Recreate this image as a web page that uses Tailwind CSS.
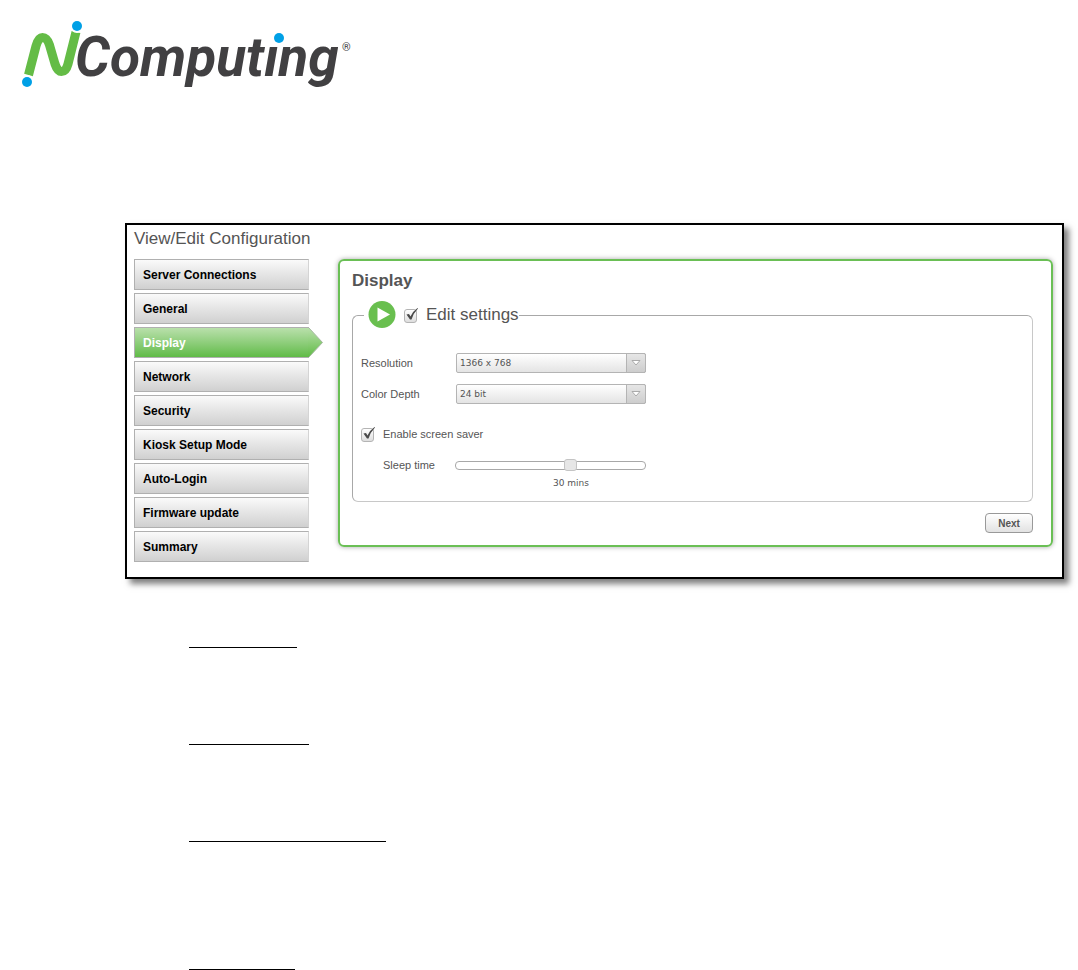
<!DOCTYPE html>
<html lang="en">
  <head>
    <meta charset="UTF-8" />
    <meta name="viewport" content="width=device-width, initial-scale=1.0" />
    <title>NComputing - View/Edit Configuration</title>
    <script src="https://cdn.jsdelivr.net/npm/@tailwindcss/browser@4"></script>
  </head>
  <body class="bg-white font-['Liberation_Sans',Arial,sans-serif] text-[#555]">
    <header class="px-5 pt-5">
      <svg class="block" width="336" height="72" viewBox="20 20 336 72" role="img" aria-label="NComputing">
        <path
          d="M28.500 75 L36 46 Q38.500 37.500 42.500 37.500 Q47 37.500 49.500 45 L55 64 Q57.500 71.500 61.500 71.500 Q66 71.500 68 64 L76 32"
          fill="none"
          stroke="#64bc46"
          stroke-width="9"
        />
        <circle cx="27" cy="82" r="7" fill="#fff" />
        <circle cx="27" cy="82" r="5" fill="#00a0e6" />
        <circle cx="77" cy="26" r="7" fill="#fff" />
        <circle cx="77" cy="26" r="5" fill="#00a0e6" />
        <text x="75" y="76" fill="#414042" font-family="Roboto, sans-serif" font-size="55" font-weight="700" font-style="italic">Computing</text>
        <circle cx="276" cy="37" r="8" fill="#fff" />
        <circle cx="279" cy="38" r="5" fill="#00a0e6" />
        <text x="342" y="51" fill="#414042" font-family="Roboto, sans-serif" font-size="11">®</text>
      </svg>
    </header>

    <main>
      <!-- Configuration window -->
      <section class="mt-[131px] mr-3.5 ml-[125px] border-2 border-black bg-white pr-[9px] pb-[15px] pl-[7px] shadow-[5px_5px_6px_rgba(0,0,0,0.5)]">
        <h1 class="h-[34px] text-[17px] leading-7">View/Edit Configuration</h1>

        <div class="flex items-start gap-[29px]">
          <nav class="flex w-[175px] shrink-0 flex-col gap-[3px] text-xs font-bold text-black">
            <a href="#" class="h-[31px] border border-[#b0b0b0] border-r-[#d4d4d4] bg-linear-to-b from-[#fafafa] to-[#d0d0d0] px-2 leading-[30px]">Server Connections</a>
            <a href="#" class="h-[31px] border border-[#b0b0b0] border-r-[#d4d4d4] bg-linear-to-b from-[#fafafa] to-[#d0d0d0] px-2 leading-[30px]">General</a>
            <a href="#" class="relative h-[31px] border border-[#b0b0b0] border-r-0 bg-linear-to-b from-[#b9e0ab] to-[#60bb46] px-2 leading-[30px] text-white">
              Display
              <svg class="absolute top-0 -right-3.5" width="15" height="29" viewBox="0 0 15 29">
                <defs>
                  <linearGradient id="arrow" x1="0" y1="0" x2="0" y2="1">
                    <stop offset="0" stop-color="#b9e0ab" />
                    <stop offset="1" stop-color="#60bb46" />
                  </linearGradient>
                </defs>
                <path d="M0 0 H1 L14.500 14.500 L1 29 H0 Z" fill="url(#arrow)" />
                <path d="M1 0 L14.500 14.500 L1 29" fill="none" stroke="#a5b8a0" />
              </svg>
            </a>
            <a href="#" class="h-[31px] border border-[#b0b0b0] border-r-[#d4d4d4] bg-linear-to-b from-[#fafafa] to-[#d0d0d0] px-2 leading-[30px]">Network</a>
            <a href="#" class="h-[31px] border border-[#b0b0b0] border-r-[#d4d4d4] bg-linear-to-b from-[#fafafa] to-[#d0d0d0] px-2 leading-[30px]">Security</a>
            <a href="#" class="h-[31px] border border-[#b0b0b0] border-r-[#d4d4d4] bg-linear-to-b from-[#fafafa] to-[#d0d0d0] px-2 leading-[30px]">Kiosk Setup Mode</a>
            <a href="#" class="h-[31px] border border-[#b0b0b0] border-r-[#d4d4d4] bg-linear-to-b from-[#fafafa] to-[#d0d0d0] px-2 leading-[30px]">Auto-Login</a>
            <a href="#" class="h-[31px] border border-[#b0b0b0] border-r-[#d4d4d4] bg-linear-to-b from-[#fafafa] to-[#d0d0d0] px-2 leading-[30px]">Firmware update</a>
            <a href="#" class="h-[31px] border border-[#b0b0b0] border-r-[#d4d4d4] bg-linear-to-b from-[#fafafa] to-[#d0d0d0] px-2 leading-[30px]">Summary</a>
          </nav>

          <form class="min-w-0 grow rounded-md border-2 border-[#6abf55] pr-[18px] pb-3 pl-3 shadow-[0_0_5px_rgba(0,0,0,0.35)]">
            <h2 class="text-[17px] leading-10 font-bold">Display</h2>

            <fieldset class="rounded-md border border-[#a8a8a8] border-r-[#c8c8c8] border-b-[#c8c8c8] pb-2.5 pl-2">
              <legend class="ml-[3px] flex h-7 items-center pl-1 text-[17px]">
                <svg width="28" height="28" viewBox="0 0 28 28" aria-hidden="true">
                  <circle cx="14" cy="13.500" r="13.500" fill="#69bf4f" />
                  <path d="M9.500 6.500 L22 13.500 L9.500 20.500 Z" fill="#fff" />
                </svg>
                <span class="relative ml-2 h-4 w-4">
                  <input type="checkbox" id="edit-settings" checked class="peer mt-0.5 block h-3.5 w-[13px] appearance-none rounded-[3px] border border-[#b4b4b4] bg-linear-to-b from-white to-[#dedede]" />
                  <svg class="pointer-events-none absolute top-0 left-0 hidden peer-checked:block" width="16" height="16" viewBox="0 0 16 16">
                    <path d="M2.500 7.500 L5 7 L6.500 9.500 Q9 4 13.500 1 L14 1.500 Q9.500 6 7.500 12.500 L6 12.500 Z" fill="#4a4a4a" />
                  </svg>
                </span>
                <label for="edit-settings" class="pl-1.5">Edit settings</label>
              </legend>

              <div class="mt-6 flex flex-col gap-[11px] text-[11px]">
                <div class="flex h-5 items-center">
                  <label for="resolution" class="w-[95px]">Resolution</label>
                  <div class="relative">
                    <select id="resolution" class="block h-5 w-[190px] appearance-none rounded-xs border border-[#b4b4b4] bg-linear-to-b from-white to-[#e4e4e4] pt-px pl-[3px] font-['DejaVu_Sans',Verdana,sans-serif] text-[9px]">
                      <option>1366 x 768</option>
                    </select>
                    <span class="pointer-events-none absolute inset-y-0 right-0 flex w-5 items-center justify-center rounded-r-xs border border-[#b4b4b4] bg-linear-to-b from-[#e6e6e6] to-[#cdcdcd]">
                      <svg width="10" height="6" viewBox="0 0 10 6"><path d="M1 0.500 H9 L5 5 Z" fill="#fff" stroke="#aaa" /></svg>
                    </span>
                  </div>
                </div>
                <div class="flex h-5 items-center">
                  <label for="color-depth" class="w-[95px]">Color Depth</label>
                  <div class="relative">
                    <select id="color-depth" class="block h-5 w-[190px] appearance-none rounded-xs border border-[#b4b4b4] bg-linear-to-b from-white to-[#e4e4e4] pt-px pl-[3px] font-['DejaVu_Sans',Verdana,sans-serif] text-[9px]">
                      <option>24 bit</option>
                    </select>
                    <span class="pointer-events-none absolute inset-y-0 right-0 flex w-5 items-center justify-center rounded-r-xs border border-[#b4b4b4] bg-linear-to-b from-[#e6e6e6] to-[#cdcdcd]">
                      <svg width="10" height="6" viewBox="0 0 10 6"><path d="M1 0.500 H9 L5 5 Z" fill="#fff" stroke="#aaa" /></svg>
                    </span>
                  </div>
                </div>
              </div>

              <div class="mt-5 flex h-5 items-center text-[11px]">
                <span class="relative h-4 w-4">
                  <input type="checkbox" id="screen-saver" checked class="peer mt-0.5 block h-3.5 w-[13px] appearance-none rounded-[3px] border border-[#b4b4b4] bg-linear-to-b from-white to-[#dedede]" />
                  <svg class="pointer-events-none absolute top-0 left-0 hidden peer-checked:block" width="16" height="16" viewBox="0 0 16 16">
                    <path d="M2.500 7.500 L5 7 L6.500 9.500 Q9 4 13.500 1 L14 1.500 Q9.500 6 7.500 12.500 L6 12.500 Z" fill="#4a4a4a" />
                  </svg>
                </span>
                <label for="screen-saver" class="pl-1.5">Enable screen saver</label>
              </div>

              <div class="mt-[11px] flex h-5 items-center text-[11px]">
                <label for="sleep-time" class="w-[94px] pl-[22px]">Sleep time</label>
                <input
                  type="range"
                  id="sleep-time"
                  min="0"
                  max="49"
                  value="30"
                  class="h-[9px] w-[191px] appearance-none rounded-[4px] border border-[#a8a8a8] bg-white [&::-webkit-slider-thumb]:h-3 [&::-webkit-slider-thumb]:w-[13px] [&::-webkit-slider-thumb]:appearance-none [&::-webkit-slider-thumb]:rounded-[3px] [&::-webkit-slider-thumb]:border [&::-webkit-slider-thumb]:border-[#c4c4c4] [&::-webkit-slider-thumb]:bg-[#e6e6e6]"
                />
              </div>
              <output for="sleep-time" class="ml-[192px] block font-['DejaVu_Sans',Verdana,sans-serif] text-[9px] leading-4">30 mins</output>
            </fieldset>

            <div class="mt-[11px] flex justify-end">
              <button type="button" class="h-5 w-12 rounded-[4px] border border-[#999] bg-linear-to-b from-white to-[#e2e2e2] text-[10px] font-bold">Next</button>
            </div>
          </form>
        </div>
      </section>

      <!-- Section rules -->
      <div class="ml-[189px] pt-[68px]">
        <hr class="w-[108px] border-black" />
        <hr class="mt-24 w-[120px] border-black" />
        <hr class="mt-24 w-[197px] border-black" />
        <hr class="mt-[127px] w-[106px] border-black" />
      </div>
    </main>
  </body>
</html>
